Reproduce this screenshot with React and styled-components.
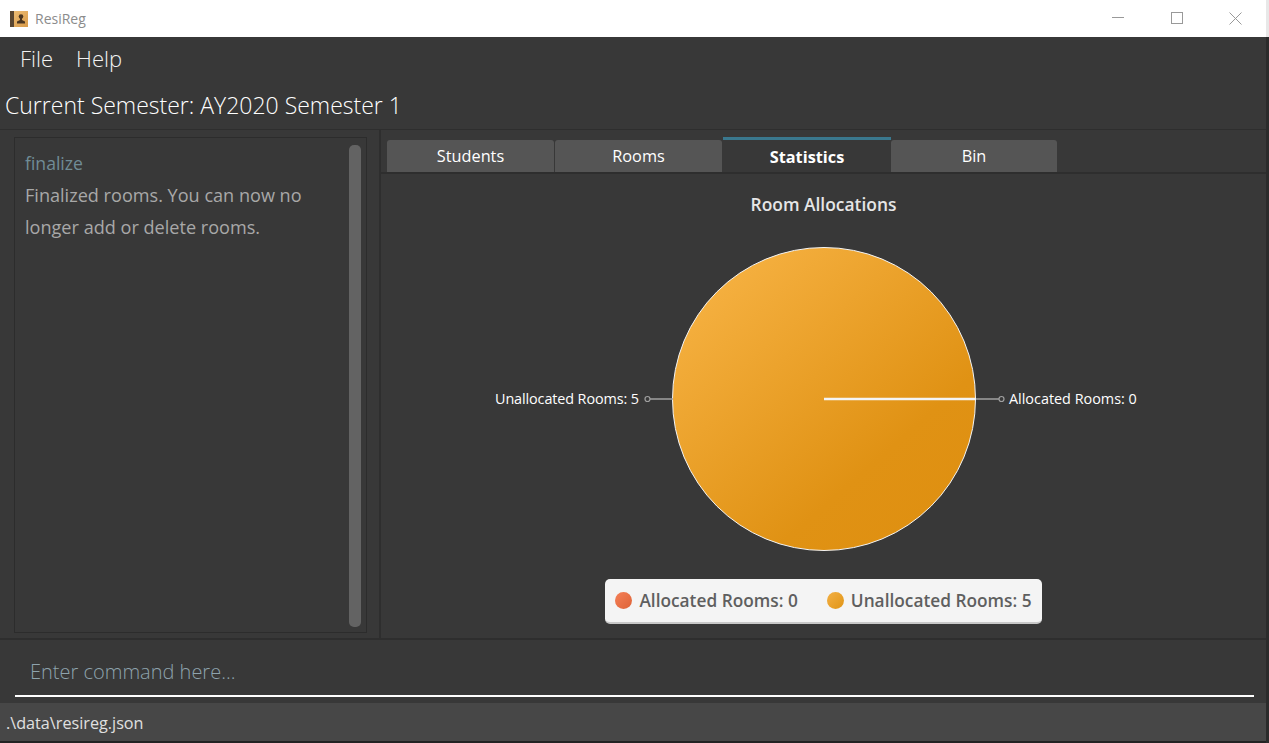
import React from 'react';
import styled, { createGlobalStyle } from 'styled-components';

const GlobalStyle = createGlobalStyle`
  html, body {
    margin: 0;
    padding: 0;
    background: #232323;
  }
  * {
    box-sizing: border-box;
  }
`;

const Screen = styled.div`
  width: 1269px;
  height: 743px;
  display: flex;
  overflow: hidden;
  background: #232323;
  font-family: "Open Sans", "Noto Sans", sans-serif;
`;

const Window = styled.div`
  width: 1266px;
  height: 741px;
  display: flex;
  flex-direction: column;
  background: #383838;
`;

const Sliver = styled.div`
  flex: 1;
  background: linear-gradient(#e8e8e8 0 37px, #2b2b2b 37px);
`;

const TitleBar = styled.div`
  height: 37px;
  flex: none;
  display: flex;
  align-items: center;
  background: #ffffff;
  padding: 0 1px 0 10px;
`;

const AppName = styled.span`
  margin-left: 7px;
  font-size: 14px;
  color: #8c8c8c;
  flex: 1;
`;

const WindowButton = styled.div`
  width: 59px;
  height: 36px;
  align-self: flex-start;
  display: flex;
  align-items: center;
  justify-content: center;
`;

const MenuBar = styled.div`
  height: 45px;
  flex: none;
  display: flex;
  align-items: center;
  gap: 23px;
  padding: 0 0 4px 20px;
  font-size: 22px;
  font-weight: 300;
  color: #f2f2f2;
`;

const SemesterRow = styled.div`
  height: 48px;
  flex: none;
  display: flex;
  align-items: center;
  padding: 0 0 2px 5px;
  font-size: 23px;
  font-weight: 300;
  color: #ffffff;
  border-bottom: 1px solid #2e2e2e;
`;

const Main = styled.div`
  height: 510px;
  flex: none;
  display: flex;
  border-bottom: 2px solid #2e2e2e;
`;

const LeftPane = styled.div`
  width: 381px;
  flex: none;
  padding: 7px 12px 5px 14px;
  border-right: 2px solid #2e2e2e;
`;

const ResultBox = styled.div`
  height: 100%;
  display: flex;
  justify-content: space-between;
  padding: 7px 5px 5px 10px;
  border: 1px solid #2c2c2c;
`;

const ResultText = styled.div`
  width: 302px;
  padding-top: 2px;
  font-size: 18.100px;
  line-height: 32px;
  font-weight: 400;
  color: #a8a8a8;
`;

const CommandEcho = styled.div`
  font-size: 17.600px;
  color: #708c96;
`;

const ScrollThumb = styled.div`
  width: 12px;
  height: 100%;
  border-radius: 5px;
  background: #636363;
`;

const RightPane = styled.div`
  flex: 1;
  display: flex;
  flex-direction: column;
`;

const TabStrip = styled.div`
  height: 44px;
  flex: none;
  display: flex;
  align-items: flex-end;
  gap: 1px;
  padding-left: 6px;
  border-bottom: 2px solid #2e2e2e;
`;

const Tab = styled.div`
  width: ${(p) => p.$width || 167}px;
  height: 32px;
  display: flex;
  align-items: center;
  justify-content: center;
  padding-bottom: 1px;
  font-size: 16.300px;
  color: #ffffff;
  background: #555555;
  border-radius: 3px 3px 0 0;
`;

const ActiveTab = styled(Tab)`
  width: 168px;
  height: 35px;
  margin-right: -1px;
  padding: 1px 0 0;
  font-weight: 700;
  background: #383838;
  border-top: 3px solid #3a788e;
  border-radius: 0;
`;

const ChartPanel = styled.div`
  flex: 1;
  display: flex;
  flex-direction: column;
  align-items: center;
`;

const ChartTitle = styled.div`
  margin-top: 18px;
  font-size: 17.400px;
  line-height: 24px;
  font-weight: 600;
  color: #e6e6e6;
`;

const Chart = styled.svg`
  margin-top: 31px;
  display: block;
  flex: none;
`;

const PieLabel = styled.text`
  font-size: 14.400px;
  fill: #ffffff;
  font-family: "Open Sans", "Noto Sans", sans-serif;
`;

const Legend = styled.div`
  margin-top: 28px;
  height: 45px;
  display: flex;
  align-items: center;
  gap: 29px;
  padding: 0 10px 1px;
  background: #f4f4f4;
  border-radius: 5px;
  border-bottom: 2px solid #c8c8c8;
`;

const LegendItem = styled.div`
  display: flex;
  align-items: center;
  gap: 7px;
  font-size: 17.300px;
  font-weight: 600;
  color: #5f5f5f;
`;

const LegendDot = styled.span`
  width: 17px;
  height: 17px;
  border-radius: 50%;
  background: linear-gradient(135deg, ${(p) => p.$from}, ${(p) => p.$to});
`;

const CommandArea = styled.div`
  height: 63px;
  flex: none;
  padding: 0 12px 6px 15px;
  display: flex;
`;

const CommandInput = styled.div`
  flex: 1;
  display: flex;
  align-items: center;
  padding: 7px 0 0 15px;
  font-size: 20px;
  font-weight: 300;
  color: #8ea3ad;
  border-bottom: 2px solid #ffffff;
`;

const StatusBar = styled.div`
  flex: 1;
  display: flex;
  align-items: center;
  padding: 1px 0 0 6px;
  font-size: 16.200px;
  color: #e0e0e0;
  background: #474747;
`;

const AppIcon = () => (
  <svg width="18" height="16" viewBox="0 0 18 16">
    <defs>
      <linearGradient id="bookFill" x1="0" y1="0" x2="1" y2="1">
        <stop offset="0" stopColor="#f0c078" />
        <stop offset="1" stopColor="#d89a48" />
      </linearGradient>
    </defs>
    <rect x="0" y="0" width="18" height="16" fill="url(#bookFill)" />
    <rect x="0" y="0" width="4" height="16" fill="#5a4630" />
    <circle cx="11" cy="5.500" r="2.300" fill="#4a3520" />
    <path d="M10 7h2v2l3 1.500V12.500H7V10.500l3-1.500z" fill="#4a3520" />
  </svg>
);

const PieChart = () => (
  <Chart width="885" height="304" viewBox="0 0 885 304">
    <defs>
      <linearGradient id="pieFill" x1="0.15" y1="0.1" x2="0.85" y2="0.9">
        <stop offset="0" stopColor="#f5b040" />
        <stop offset="0.75" stopColor="#e09214" />
        <stop offset="1" stopColor="#df9011" />
      </linearGradient>
    </defs>
    <circle cx="443" cy="152" r="151.500" fill="url(#pieFill)" stroke="#f4f4f4" strokeWidth="1" />
    <line x1="443" y1="152" x2="595" y2="152" stroke="#f4f4f4" strokeWidth="2.500" />
    <line x1="269" y1="152" x2="292" y2="152" stroke="#a0a0a0" strokeWidth="1.500" />
    <circle cx="266.500" cy="152" r="2.500" fill="#383838" stroke="#a0a0a0" strokeWidth="1.200" />
    <line x1="595" y1="152" x2="618" y2="152" stroke="#a0a0a0" strokeWidth="1.500" />
    <circle cx="620.500" cy="152" r="2.500" fill="#383838" stroke="#a0a0a0" strokeWidth="1.200" />
    <PieLabel x="258" y="157" textAnchor="end" textLength="144">Unallocated Rooms: 5</PieLabel>
    <PieLabel x="628" y="157">Allocated Rooms: 0</PieLabel>
  </Chart>
);

const App = () => (
  <>
    <GlobalStyle />
    <Screen>
      <Window>
        <TitleBar>
          <AppIcon />
          <AppName>ResiReg</AppName>
          <WindowButton>
            <svg width="12" height="12" viewBox="0 0 12 12">
              <line x1="0" y1="5.500" x2="12" y2="5.500" stroke="#999999" />
            </svg>
          </WindowButton>
          <WindowButton>
            <svg width="12" height="12" viewBox="0 0 12 12">
              <rect x="0.500" y="0.500" width="11" height="11" fill="none" stroke="#999999" />
            </svg>
          </WindowButton>
          <WindowButton>
            <svg width="13" height="13" viewBox="0 0 13 13">
              <path d="M0.500 0.500L12.500 12.500M12.500 0.500L0.500 12.500" stroke="#999999" fill="none" />
            </svg>
          </WindowButton>
        </TitleBar>
        <MenuBar>
          <span>File</span>
          <span>Help</span>
        </MenuBar>
        <SemesterRow>Current Semester: AY2020 Semester 1</SemesterRow>
        <Main>
          <LeftPane>
            <ResultBox>
              <ResultText>
                <CommandEcho>finalize</CommandEcho>
                Finalized rooms. You can now no longer add or delete rooms.
              </ResultText>
              <ScrollThumb />
            </ResultBox>
          </LeftPane>
          <RightPane>
            <TabStrip>
              <Tab>Students</Tab>
              <Tab>Rooms</Tab>
              <ActiveTab>Statistics</ActiveTab>
              <Tab $width={166}>Bin</Tab>
            </TabStrip>
            <ChartPanel>
              <ChartTitle>Room Allocations</ChartTitle>
              <PieChart />
              <Legend>
                <LegendItem>
                  <LegendDot $from="#f58058" $to="#dd6236" />
                  Allocated Rooms: 0
                </LegendItem>
                <LegendItem>
                  <LegendDot $from="#f3b045" $to="#e09415" />
                  Unallocated Rooms: 5
                </LegendItem>
              </Legend>
            </ChartPanel>
          </RightPane>
        </Main>
        <CommandArea>
          <CommandInput>Enter command here...</CommandInput>
        </CommandArea>
        <StatusBar>.\data\resireg.json</StatusBar>
      </Window>
      <Sliver />
    </Screen>
  </>
);

export default App;
